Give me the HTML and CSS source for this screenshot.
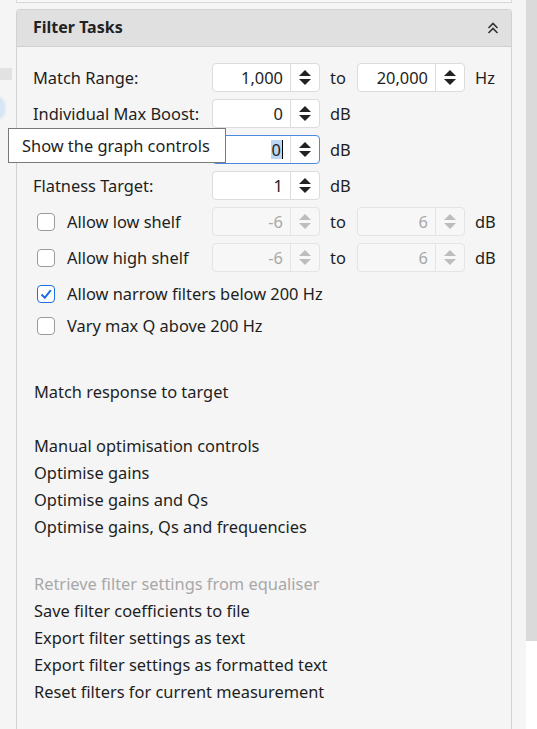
FILE: index.html
```html
<!DOCTYPE html>
<html lang="en">
<head>
    <meta charset="UTF-8">
    <meta name="viewport" content="width=device-width, initial-scale=1.0">
    <title>Filter Tasks</title>
    <link rel="stylesheet" href="styles.css">
</head>
<body>
    <div class="gutter">
        <div class="gutter-block"></div>
        <div class="gutter-glow"></div>
    </div>
    <div class="main">
        <div class="prev-panel"></div>
        <div class="panel">
            <div class="panel-header">
                <span class="panel-title">Filter Tasks</span>
                <svg class="collapse" width="14" height="14" viewBox="0 0 14 14">
                    <path d="M2.5 7 L7 2.5 L11.5 7 M2.5 12 L7 7.5 L11.5 12" fill="none" stroke="#333" stroke-width="1.6"/>
                </svg>
            </div>
            <div class="panel-body">
                <div class="row">
                    <span class="label">Match Range:</span>
                    <div class="spin"><span class="val">1,000</span><span class="arrows"></span></div>
                    <span class="unit to">to</span>
                    <div class="spin"><span class="val">20,000</span><span class="arrows"></span></div>
                    <span class="unit">Hz</span>
                </div>
                <div class="row">
                    <span class="label">Individual Max Boost:</span>
                    <div class="spin"><span class="val">0</span><span class="arrows"></span></div>
                    <span class="unit">dB</span>
                </div>
                <div class="row">
                    <span class="label"></span>
                    <div class="spin focused"><span class="val"><span class="sel">0</span><span class="caret"></span></span><span class="arrows"></span></div>
                    <span class="unit">dB</span>
                    <div class="tooltip">Show the graph controls</div>
                </div>
                <div class="row">
                    <span class="label">Flatness Target:</span>
                    <div class="spin"><span class="val">1</span><span class="arrows"></span></div>
                    <span class="unit">dB</span>
                </div>
                <div class="row">
                    <label class="check"><span class="box"></span>Allow low shelf</label>
                    <div class="spin disabled"><span class="val">-6</span><span class="arrows"></span></div>
                    <span class="unit to">to</span>
                    <div class="spin disabled"><span class="val">6</span><span class="arrows"></span></div>
                    <span class="unit">dB</span>
                </div>
                <div class="row">
                    <label class="check"><span class="box"></span>Allow high shelf</label>
                    <div class="spin disabled"><span class="val">-6</span><span class="arrows"></span></div>
                    <span class="unit to">to</span>
                    <div class="spin disabled"><span class="val">6</span><span class="arrows"></span></div>
                    <span class="unit">dB</span>
                </div>
                <div class="row short">
                    <label class="check"><span class="box checked">
                        <svg width="14" height="14" viewBox="0 0 14 14"><path d="M2.5 7.5 L5.8 10.8 L11.8 3.2" fill="none" stroke="#1a6fe0" stroke-width="2"/></svg>
                    </span>Allow narrow filters below 200 Hz</label>
                </div>
                <div class="row short">
                    <label class="check"><span class="box"></span>Vary max Q above 200 Hz</label>
                </div>

                <ul class="links first">
                    <li>Match response to target</li>
                </ul>
                <ul class="links">
                    <li>Manual optimisation controls</li>
                    <li>Optimise gains</li>
                    <li>Optimise gains and Qs</li>
                    <li>Optimise gains, Qs and frequencies</li>
                </ul>
                <ul class="links">
                    <li class="off">Retrieve filter settings from equaliser</li>
                    <li>Save filter coefficients to file</li>
                    <li>Export filter settings as text</li>
                    <li>Export filter settings as formatted text</li>
                    <li>Reset filters for current measurement</li>
                </ul>
            </div>
        </div>
    </div>
    <div class="scrollbar">
        <div class="thumb"></div>
    </div>
</body>
</html>
```

FILE: styles.css
```css
body {
    font-family: 'Noto Sans', 'Open Sans', sans-serif;
    font-size: 16.4px;
    color: #1e1e1e;
    background-color: #f5f5f5;
    margin: 0;
    height: 729px;
    overflow: hidden;
    display: flex;
}
.gutter {
    width: 16px;
    flex-shrink: 0;
}
.gutter-block {
    margin-top: 68px;
    width: 12px;
    height: 12px;
    background-color: #e2e2e2;
}
.gutter-glow {
    margin-top: 18px;
    margin-left: -8px;
    width: 12px;
    height: 20px;
    border-radius: 50%;
    background-color: #d6e6f6;
    box-shadow: 0 0 4px #b8d4f0;
}
.main {
    width: 496px;
    flex-shrink: 0;
    display: flex;
    flex-direction: column;
}
.prev-panel {
    height: 2px;
    border: 1px solid #d8d8d8;
    border-top: none;
    background-color: #f8f8f8;
}
.panel {
    flex: 1;
    min-height: 0;
    margin-top: 6px;
    border: 1px solid #d2d2d2;
    border-bottom: none;
    border-radius: 4px 4px 0 0;
    background-color: #f5f5f5;
}
.panel-header {
    height: 36px;
    background-color: #e0e0e0;
    border-bottom: 1px solid #cfcfcf;
    border-radius: 3px 3px 0 0;
    display: flex;
    align-items: center;
    justify-content: space-between;
    padding: 0 11px 0 16px;
}
.panel-title {
    font-weight: bold;
    font-size: 16px;
    color: #222;
    margin-top: -2px;
}
.panel-body {
    padding: 16px 0 0 16px;
}
.row {
    position: relative;
    display: flex;
    align-items: center;
    height: 29px;
    margin-bottom: 7px;
}
.row.short {
    height: 29px;
    margin-bottom: 3px;
}
.label {
    width: 179px;
    flex-shrink: 0;
    white-space: nowrap;
}
.check {
    display: flex;
    align-items: center;
    width: 179px;
    flex-shrink: 0;
    white-space: nowrap;
}
.box {
    width: 16px;
    height: 16px;
    flex-shrink: 0;
    border: 1px solid #9a9a9a;
    border-radius: 4px;
    background-color: #fff;
    margin: 0 12px 0 4px;
    display: flex;
    align-items: center;
    justify-content: center;
}
.box.checked {
    border-color: #1a6fe0;
}
.spin {
    width: 106px;
    height: 27px;
    flex-shrink: 0;
    border: 1px solid #dcdcdc;
    border-radius: 4px;
    background-color: #fff;
    display: flex;
}
.spin .val {
    flex: 1;
    padding-right: 7px;
    display: flex;
    justify-content: flex-end;
    align-items: center;
}
.spin .arrows {
    width: 28px;
    border-left: 1px solid #dcdcdc;
    position: relative;
}
.spin .arrows::before,
.spin .arrows::after {
    content: "";
    position: absolute;
    left: 8px;
    border-left: 6px solid transparent;
    border-right: 6px solid transparent;
}
.spin .arrows::before {
    top: 6px;
    border-bottom: 6px solid #222;
}
.spin .arrows::after {
    top: 15px;
    border-top: 6px solid #222;
}
.spin.focused {
    border-color: #4a8ae0;
}
.sel {
    background-color: #bcd6f5;
    line-height: 19px;
    padding: 0 1px;
}
.caret {
    width: 1px;
    height: 19px;
    background-color: #000;
}
.spin.disabled {
    background-color: #f7f7f7;
    border-color: #e4e4e4;
    color: #a8a8a8;
}
.spin.disabled .arrows {
    border-left-color: #e4e4e4;
}
.spin.disabled .arrows::before {
    border-bottom-color: #bdbdbd;
}
.spin.disabled .arrows::after {
    border-top-color: #bdbdbd;
}
.unit {
    margin-left: 10px;
}
.unit.to {
    width: 27px;
}
.tooltip {
    position: absolute;
    left: -25px;
    top: -7px;
    width: 203px;
    height: 33px;
    padding-left: 13px;
    line-height: 33px;
    background-color: #fff;
    border: 1px solid #7a7a7a;
    color: #1e1e1e;
    white-space: nowrap;
    z-index: 2;
}
.links {
    list-style: none;
    margin: 0;
    padding: 0 0 0 1px;
}
.links li {
    height: 27px;
    line-height: 27px;
    white-space: nowrap;
}
.links.first {
    margin-top: 38px;
    margin-bottom: 27px;
}
.links + .links {
    margin-top: 30px;
}
.links.first + .links {
    margin-top: 0;
}
.links .off {
    color: #a8a8a8;
}
.scrollbar {
    flex: 1;
    margin-left: 14px;
    background-color: #fff;
}
.thumb {
    height: 641px;
    background-color: #dadada;
}
```
